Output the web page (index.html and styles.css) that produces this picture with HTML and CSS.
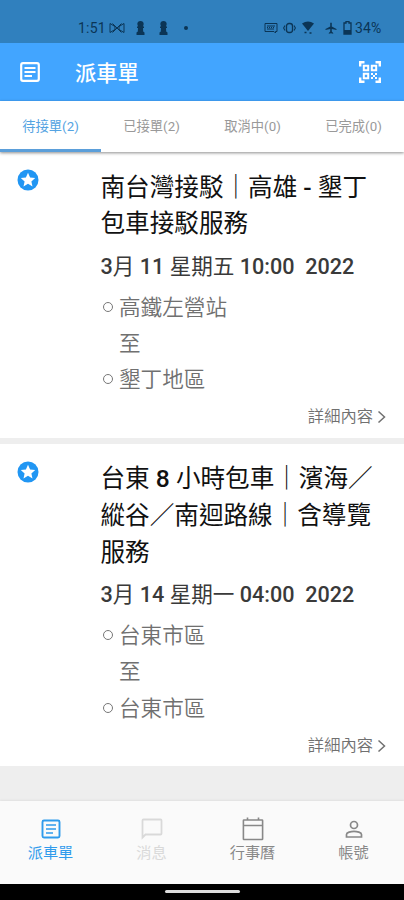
FILE: index.html
```html
<!DOCTYPE html>
<html lang="zh-Hant">
<head>
<meta charset="utf-8">
<title>派車單</title>
<link rel="stylesheet" href="styles.css">
</head>
<body>
<div class="app">
  <div class="status">
    <span class="clock">1:51</span>
    <svg class="s-link" width="16" height="12" viewBox="0 0 16 12"><path d="M1 1.500l5 3v3l-5 3zM15 1.500l-5 3v3l5 3zM3.500 1.500l9 9M12.500 1.500l-9 9" fill="none" stroke="currentColor" stroke-width="1"/></svg>
    <svg class="s-pawn" width="9" height="14" viewBox="0 0 9 14"><path d="M4.500 0a3.200 3.200 0 0 1 3.200 3L7 5.500h1V7H7l.2 3.500 1.300 1V14H.5v-2.500l1.300-1L2 7H1V5.500h1L1.300 3a3.200 3.200 0 0 1 3.200-3z" fill="currentColor"/></svg>
    <svg class="s-pawn2" width="9" height="14" viewBox="0 0 9 14"><path d="M4.500 0a3.200 3.200 0 0 1 3.200 3L7 5.500h1V7H7l.2 3.500 1.300 1V14H.5v-2.500l1.300-1L2 7H1V5.500h1L1.300 3a3.200 3.200 0 0 1 3.200-3z" fill="currentColor"/></svg>
    <span class="s-dot"></span>
    <svg class="s-key" width="14" height="12" viewBox="0 0 14 12"><path d="M1 1.500h12v8h-1.500v1.500L10 9.500H1zM3 4h8M3 7h7" fill="none" stroke="currentColor"/><path d="M3 5.500h8" stroke="currentColor" stroke-dasharray="1 1"/></svg>
    <svg class="s-vib" width="13" height="12" viewBox="0 0 13 12"><rect x="3.500" y="1.500" width="6" height="9" rx="2.500" fill="none" stroke="currentColor" stroke-width="1.300"/><path d="M2 3.500L.6 6 2 8.500M11 3.500L12.400 6 11 8.500" fill="none" stroke="currentColor" stroke-width="1.100"/></svg>
    <svg class="s-wifi" width="12" height="14" viewBox="0 0 12 14"><path d="M0 2.500Q6-1.500 12 2.500L6 10z" fill="currentColor"/><path d="M2.500 11.500h2M7.500 12h2" stroke="currentColor" stroke-width="1.500"/></svg>
    <svg class="s-plane" width="12" height="12" viewBox="0 0 12 12"><path d="M5.200 1q.8-1 1.600 0v3.600L11.500 7v1L6.800 7v2.600L8.200 11v.8L6 11.200l-2.200.6V11l1.400-1.400V7L.5 8V7l4.700-2.400z" fill="currentColor"/></svg>
    <svg class="s-bat" width="9" height="14" viewBox="0 0 9 14"><path d="M3 .7h3v1.300h2V13H1V2h2z" fill="none" stroke="currentColor" stroke-width="1.300"/><path d="M1 9h7v4H1z" fill="currentColor"/></svg>
    <span class="pct">34%</span>
  </div>

  <header class="bar">
    <svg class="bar-list" width="20" height="20" viewBox="0 0 20 20"><rect x="1.200" y="1.200" width="17.600" height="17.600" rx="1.800" fill="none" stroke="currentColor" stroke-width="2.200"/><path d="M4.500 6h11M4.500 10h11M4.500 14h7.500" stroke="currentColor" stroke-width="1.900"/></svg>
    <h1>派車單</h1>
    <svg class="bar-qr" width="22" height="22" viewBox="0 0 22 22"><g fill="none" stroke="currentColor"><path d="M1.200 5.500V1.200h4.300M16.500 1.200h4.300v4.300M20.800 16.500v4.300h-4.300M5.500 20.800H1.200v-4.300" stroke-width="2.400"/><path d="M4.800 4.800h4.400v4.400H4.800zM12.800 4.800h4.400v4.400h-4.400zM4.800 12.800h4.400v4.400H4.800z" stroke-width="2"/></g><path d="M12 12h2v2h-2zM16 12h2v2h-2zM14 14h2v2h-2zM12 16h2v2h-2zM16 16h2v2h-2z" fill="currentColor"/></svg>
  </header>

  <nav class="tabs">
    <span class="tab active">待接單(2)</span>
    <span class="tab">已接單(2)</span>
    <span class="tab">取消中(0)</span>
    <span class="tab">已完成(0)</span>
  </nav>

  <main class="list">
    <article class="card">
      <svg class="star" width="22" height="22" viewBox="0 0 22 22"><circle cx="11" cy="11" r="10.500" fill="#2196f3"/><path d="M11 3.800l2.100 4.700 5.100.5-3.800 3.400 1.100 5-4.500-2.600-4.500 2.600 1.100-5L3.800 9l5.100-.5z" fill="#fff"/></svg>
      <div class="body">
        <h2>南台灣接駁｜高雄 <b>-</b> 墾丁<br>包車接駁服務</h2>
        <p class="date"><b>3</b>月 <b>11</b> 星期五 <b>10:00&nbsp; 2022</b></p>
        <p class="stop"><i class="ring"></i>高鐵左營站</p>
        <p class="stop to">至</p>
        <p class="stop"><i class="ring"></i>墾丁地區</p>
        <a class="more">詳細內容<svg width="9" height="14" viewBox="0 0 9 14"><path d="M1.500 1.500L7.500 7l-6 5.500" fill="none" stroke="currentColor" stroke-width="1.500"/></svg></a>
      </div>
    </article>
    <article class="card">
      <svg class="star" width="22" height="22" viewBox="0 0 22 22"><circle cx="11" cy="11" r="10.500" fill="#2196f3"/><path d="M11 3.800l2.100 4.700 5.100.5-3.800 3.400 1.100 5-4.500-2.600-4.500 2.600 1.100-5L3.800 9l5.100-.5z" fill="#fff"/></svg>
      <div class="body">
        <h2>台東 <b>8</b> 小時包車｜濱海／<br>縱谷／南迴路線｜含導覽<br>服務</h2>
        <p class="date"><b>3</b>月 <b>14</b> 星期一 <b>04:00&nbsp; 2022</b></p>
        <p class="stop"><i class="ring"></i>台東市區</p>
        <p class="stop to">至</p>
        <p class="stop"><i class="ring"></i>台東市區</p>
        <a class="more">詳細內容<svg width="9" height="14" viewBox="0 0 9 14"><path d="M1.500 1.500L7.500 7l-6 5.500" fill="none" stroke="currentColor" stroke-width="1.500"/></svg></a>
      </div>
    </article>
  </main>

  <nav class="bottom">
    <div class="item on">
      <svg width="24" height="24" viewBox="0 0 24 24"><rect x="3.500" y="3.500" width="17" height="17" rx="1.500" fill="none" stroke="currentColor" stroke-width="1.900"/><path d="M7 8h10M7 12h10M7 16h7" stroke="currentColor" stroke-width="1.600"/></svg>
      <span>派車單</span>
    </div>
    <div class="item off">
      <svg width="24" height="24" viewBox="0 0 24 24"><path d="M2.500 20.500V3.500q0-1 1-1h17q1 0 1 1v13q0 1-1 1h-15z" fill="none" stroke="currentColor" stroke-width="1.800"/></svg>
      <span>消息</span>
    </div>
    <div class="item">
      <svg width="24" height="24" viewBox="0 0 24 24"><path d="M3 3h18q.6 0 .6.600v18.300q0 .6-.6.600H3q-.6 0-.6-.6V3.600q0-.6.600-.6zM2.400 8.500h19.200M6.500.5v3M17.500.5v3" fill="none" stroke="currentColor" stroke-width="1.600"/></svg>
      <span>行事曆</span>
    </div>
    <div class="item">
      <svg width="24" height="24" viewBox="0 0 24 24"><circle cx="12" cy="8" r="3.500" fill="none" stroke="currentColor" stroke-width="1.700"/><path d="M4.500 20v-2.500c0-2 4.500-3.200 7.500-3.200s7.500 1.200 7.500 3.200V20z" fill="none" stroke="currentColor" stroke-width="1.700"/></svg>
      <span>帳號</span>
    </div>
  </nav>
  <div class="system"><span class="pill"></span></div>
</div>
</body>
</html>
```
FILE: styles.css
```css
* { box-sizing: border-box; }
body, h1, h2, p { margin: 0; font-weight: 400; }
body { font-family: Roboto, "Noto Sans CJK TC", sans-serif; background: #eee; }
b { font-weight: 500; }
svg { display: block; flex: none; }
.app { width: 404px; height: 900px; display: flex; flex-direction: column; overflow: hidden; }

.status { height: 43px; flex: none; background: #3080be; color: #0b3556; display: flex; align-items: center; padding: 12px 0 0 78px; font-size: 14px; }
.clock { width: 31px; letter-spacing: .2px; }
.s-pawn { margin-left: 11px; }
.s-pawn2 { margin-left: 14px; }
.s-dot { width: 4px; height: 4px; border-radius: 50%; background: currentColor; margin-left: 16px; }
.s-key { margin-left: 76px; }
.s-vib { margin-left: 5px; }
.s-wifi { margin-left: 6px; }
.s-plane { margin-left: 11px; }
.s-bat { margin-left: 6px; }
.pct { margin-left: 3px; letter-spacing: .1px; }

.bar { height: 58px; flex: none; background: #42a5ff; color: #fff; display: flex; align-items: center; padding: 0 23px 0 20px; }
.bar h1 { font-size: 21.300px; line-height: 30px; font-weight: 500; margin: 3px 0 0 35px; flex: 1; }

.tabs { height: 51px; flex: none; display: flex; background: #fff; box-shadow: 0 1px 3px rgba(0,0,0,.45); z-index: 1; font-size: 13.300px; color: #999; }
.tab { flex: 1; text-align: center; line-height: 51px; }
.tab.active { color: #54a3e2; border-bottom: 3px solid #5b9fda; }

.list { flex: 1; display: flex; flex-direction: column; gap: 6px; background: #eee; }
.card { background: #fff; display: flex; padding: 17.500px 0 8.600px 17px; color: #111; }
.star { margin-top: -.5px; }
.body { flex: 1; margin-left: 61.500px; padding-right: 18px; }
h2 { font-size: 24.600px; line-height: 36.600px; white-space: nowrap; }
.date { font-size: 21.600px; line-height: 36px; margin: 6px 0 5px; color: #3a3a3a; white-space: pre; }
.stop { font-size: 21.600px; line-height: 36.200px; color: #707070; display: flex; align-items: center; font-weight: 350; }
.ring { width: 10px; height: 10px; border: 1.500px solid #777; border-radius: 50%; margin: 0 6.500px 2px 2px; }
.to { padding-left: 18.500px; }
.more { display: flex; justify-content: flex-end; align-items: center; gap: 4px; font-size: 16.300px; line-height: 24px; color: #707070; margin-top: 7px; font-weight: 350; }

.bottom { height: 83px; flex: none; background: #fafafa; display: flex; color: #888; padding-top: 15.500px; box-shadow: 0 -1px 2px rgba(0,0,0,.06); }
.item { flex: 1; display: flex; flex-direction: column; align-items: center; font-size: 15.200px; line-height: 25px; }
.on { color: #2f9bec; }
.off { color: #d9d9d9; }
.system { height: 16px; flex: none; background: #000; display: flex; justify-content: center; padding-top: 6px; }
.pill { width: 75px; height: 3px; border-radius: 2px; background: #ddd; }
```
